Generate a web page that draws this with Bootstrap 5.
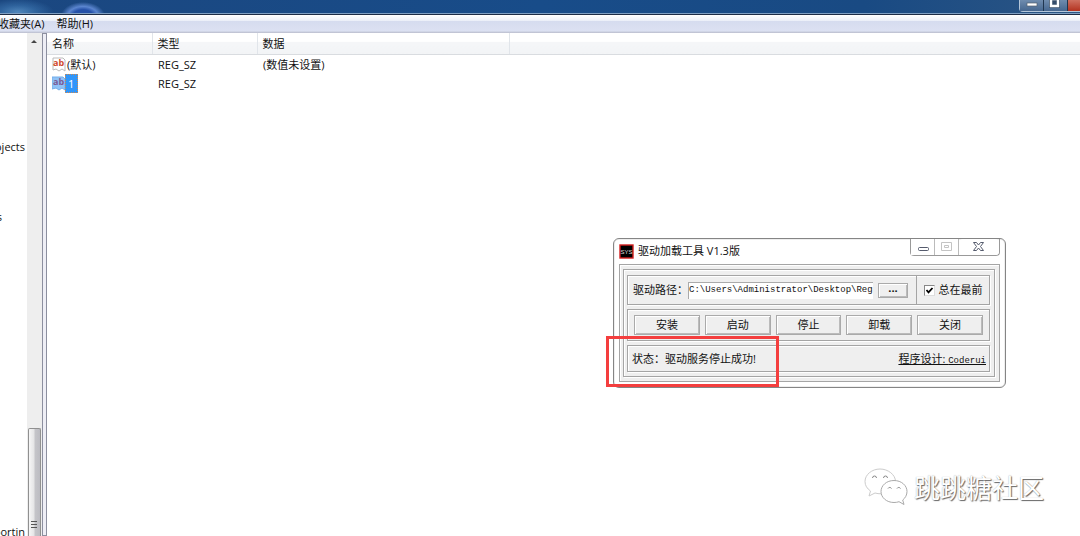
<!DOCTYPE html>
<html lang="zh-CN">
<head>
<meta charset="utf-8">
<meta name="viewport" content="width=device-width, initial-scale=1">
<title>注册表编辑器</title>
<link rel="stylesheet" href="https://cdn.jsdelivr.net/npm/bootstrap@5.3.0/dist/css/bootstrap.min.css">
<style>
body{font:11px/18px "Open Sans","Noto Sans CJK SC",sans-serif;color:#111;background:#fff}
button{padding:0;border:0;font:inherit;color:inherit}
svg{display:block}
/* main window chrome */
.titlebar{height:15px;background:radial-gradient(ellipse 36px 13px at 18px 12px,#6aa5d8aa 0,#3f7ab588 50%,transparent 100%),radial-gradient(ellipse 22px 14px at 83px 16px,#2450a8 0 45%,#6a94e2cc 68%,transparent 100%),linear-gradient(90deg,#1b4780,#184c89 50%,#194a83 80%,#2b5584);border-bottom:1px solid #1d2c46;box-shadow:inset 0 -1px #7f9fc2}
.caption-set{height:12px;border:1px solid #b4c6da;border-width:0 0 1px 1px;border-bottom-left-radius:4px}
.caption-set button{width:24px;background:linear-gradient(#6f8cae,#46678f);border-right:1px solid #20364f}
.caption-set .x-main{width:12px;background:linear-gradient(#cf7060,#b3321f);border:0}
.menubar{height:18px;background:linear-gradient(#fff 0,#eef1f9 30%,#d6dcef 36%,#dce1f2 88%,#b9bccc 100%)}
.menubar a{color:#111;line-height:17px}
.menu-fav{margin-left:-2px}
.tree-pane{width:27px}
.tree-pane li{height:18px;padding-right:2px;white-space:nowrap;display:flex;justify-content:flex-end}
.tree-first{margin-top:105px}
.tree-second{margin-top:52px;margin-right:23px}
.tree-pane .tree-last{height:13px}
.scroll-track{width:15px;background:#eee}
.scroll-thumb{height:21.5%;margin:0 1px;border:1px solid #909090;border-bottom:0;border-radius:2px 2px 0 0;background:linear-gradient(90deg,#f6f6f6,#e5e5e6 45%,#c5c5c9 55%,#bcbcc2)}
.splitter{width:5px;background:#eeeef5;border:1px solid #8c8f9f}
.reg-table{table-layout:fixed}
.reg-table th{height:21px;padding:2px 5px 0;font-weight:400;background:linear-gradient(#fff 40%,#f5f6f8 45%,#f2f4f6);border-right:1px solid #e1e5ea;border-bottom:1px solid #d9dce0}
.reg-table th:last-child{border-right:0}
.reg-table td{height:19px;padding:0 6px;line-height:19px;vertical-align:top}
.reg-table td:first-child{padding-left:5px}
.c-name,.c-type{width:105px}.c-data{width:252px}
.picked{background:#3096fa;color:#fff;padding:0 4px 0 3px;outline:1px dotted #d08b50;outline-offset:-1px}
/* driver tool window */
.tool{left:613px;top:238px;width:393px;background:#fff;border:1px solid #858585;border-radius:6px;padding:0 5px 5px;box-shadow:inset 0 0 0 1px #eee}
.tool-title{height:25px}
.tool-title h1{font-size:11px;line-height:24px}
.tool-caps{height:17px;border:1px solid #999;border-top:0;border-radius:0 0 4px 4px}
.tool-caps button{width:24px;background:#fff;border-right:1px solid #bbb}
.tool-caps button:last-child{width:40px;border:0;border-radius:4px}
.etched{border:1px solid #a5a5a5;box-shadow:inset 1px 1px #fff,1px 1px #fff}
.shell{background:#efefef;padding:4px 4px 4px 3px}
.stack{padding:5px 4px 4px 3px;gap:4px}
.path-row{height:30px}
.path-cell{padding-left:5px;border-right:1px solid #a5a5a5}
.path-box{width:185px;height:17px;border:0;border-top:1px solid #aaa;border-left:1px solid #aaa;border-radius:0;padding:0 0 2px;background:#fff;color:#111;font:9px/14px "Liberation Mono",monospace;outline:0}
.raised{background:#efefef;border:1px solid #fff;border-right-color:#777;border-bottom-color:#777;outline:1px solid #aaa;outline-offset:-1px;box-shadow:inset 1px 1px #fff,inset -1px -1px #bbb}
.browse{width:30px;height:15px;margin:0 8px 0 5px;line-height:9px;font-weight:700}
.top-check input{appearance:none;width:11px;height:11px;margin:0;border:1px solid #888;border-right-color:#ddd;border-bottom-color:#ddd;background:#fff}
.top-check input:checked{background:#fff url("data:image/svg+xml,%3Csvg xmlns='http://www.w3.org/2000/svg' viewBox='0 0 9 9'%3E%3Cpath d='M1.5 4l2 2.3L7.5 2' fill='none' stroke='%23000' stroke-width='1.8'/%3E%3C/svg%3E") center/9px}
.button-row{height:32px;padding:0 6px;gap:5px}
.button-row button{height:20px;line-height:16px}
.status-row{height:27px;padding:0 3px 0 4px}
.credit{color:#111;font-size:11px}
.credit span{font:9px "Liberation Mono",monospace}
.highlight{left:-22px;top:-10px;width:173px;height:51px;border:3px solid #f43e3e;pointer-events:none}
.watermark{right:36px;bottom:29px;gap:6px;color:#fff;font:26px/40px "Noto Sans CJK SC",sans-serif;text-shadow:1px 1px 1px #666,0 0 1px #aaa}
</style>
</head>
<body>
<div class="vh-100 d-flex flex-column overflow-hidden position-relative">
  <header class="titlebar d-flex justify-content-end flex-shrink-0">
    <div class="caption-set d-flex">
      <button aria-label="最小化"><svg width="23" height="11"><rect x="7" y="3" width="10" height="3" fill="#fff" stroke="#53606d" stroke-width=".7"/></svg></button>
      <button aria-label="最大化"><svg width="23" height="11"><path d="M7-1h7v7H7z" fill="none" stroke="#3e536a" stroke-width="4"/><path d="M7-1h7v7H7z" fill="none" stroke="#fff" stroke-width="2.4"/><path d="M9 1h3v3H9z" fill="#354d6a"/></svg></button>
      <button class="x-main" aria-label="关闭"></button>
    </div>
  </header>
  <nav class="menubar d-flex flex-shrink-0">
    <a class="menu-fav text-decoration-none text-nowrap" href="#">收藏夹(A)</a>
    <a class="text-decoration-none text-nowrap ps-2 ms-1" href="#">帮助(H)</a>
  </nav>
  <main class="d-flex flex-grow-1 overflow-hidden">
    <aside class="tree-pane flex-shrink-0 overflow-hidden">
      <ul class="list-unstyled mb-0 h-100 d-flex flex-column">
        <li class="tree-first">ojects</li>
        <li class="tree-second">s</li>
        <li class="tree-last mt-auto flex-shrink-0">portin</li>
      </ul>
    </aside>
    <div class="scroll-track d-flex flex-column flex-shrink-0 justify-content-between">
      <svg width="15" height="17"><path d="M4 10l3-3 3 3z" fill="#444"/></svg>
      <div class="scroll-thumb d-flex align-items-end justify-content-center pb-2"><svg width="7" height="7"><path d="M0 .5h6M0 3.5h6M0 6.5h6" stroke="#555"/></svg></div>
    </div>
    <div class="splitter flex-shrink-0"></div>
    <section class="flex-grow-1">
      <table class="reg-table w-100">
        <colgroup><col class="c-name"><col class="c-type"><col class="c-data"><col></colgroup>
        <thead><tr><th>名称</th><th>类型</th><th>数据</th><th></th></tr></thead>
        <tbody>
          <tr><td><div class="d-flex align-items-center"><svg width="15" height="15" viewBox="0 0 15 15"><path d="M1 1h10l2 2v11l-3-2-3 2-3-2-3 1z" fill="#fff" stroke="#bbb"/><text x="1" y="9" font-size="9" font-weight="700" fill="#d0492c">ab</text></svg>(默认)</div></td><td>REG_SZ</td><td>(数值未设置)</td><td></td></tr>
          <tr><td><div class="d-flex align-items-center"><svg width="13" height="15" viewBox="0 0 13 15"><path d="M0 1h11l2 2v11l-3-2-3 2-3-2-4 1z" fill="#8fc2f7" stroke="#75aeea"/><text x="1" y="9" font-size="9" font-weight="700" fill="#795b96">ab</text></svg><span class="picked">1</span></div></td><td>REG_SZ</td><td></td><td></td></tr>
        </tbody>
      </table>
    </section>
  </main>

  <section class="tool position-absolute">
    <div class="tool-title d-flex align-items-start">
      <svg class="mt-1" width="15" height="16" viewBox="0 0 15 16"><rect x="1" y="2" width="13" height="13" fill="#000" stroke="#d21e1e" stroke-width="1.4"/><text x="1.5" y="11" font-family="Liberation Sans" font-size="6" fill="#ddd">SYS</text></svg>
      <h1 class="mb-0 ms-1 fw-normal">驱动加载工具 V1.3版</h1>
      <div class="tool-caps ms-auto d-flex">
        <button aria-label="最小化"><svg width="23" height="16"><rect x="7.5" y="8.500" width="10" height="3" rx="1" fill="#fff" stroke="#555b6d"/></svg></button>
        <button aria-label="最大化" disabled><svg width="23" height="16"><path d="M6.500 3.500h10v8h-10zM9.500 6.500h4v2h-4z" fill="#fff" stroke="#c4c4c4"/></svg></button>
        <button aria-label="关闭"><svg width="40" height="16"><path d="M14.500 3.500h3l2 2.500 2-2.500h3l-3 4 3 4h-3l-2-2.500-2 2.500h-3l3-4z" fill="#fff" stroke="#555b6d"/></svg></button>
      </div>
    </div>
    <div class="shell etched">
      <div class="stack etched d-flex flex-column">
        <div class="path-row etched d-flex">
          <div class="path-cell d-flex align-items-center">
            <label class="text-nowrap" for="path">驱动路径&#65306;</label>
            <input class="path-box" id="path" value="C:\Users\Administrator\Desktop\Reg">
            <button class="browse raised" aria-label="浏览">···</button>
          </div>
          <div class="top-check d-flex flex-grow-1 align-items-center justify-content-center gap-1">
            <input id="ontop" type="checkbox" checked><label class="text-nowrap" for="ontop">总在最前</label>
          </div>
        </div>
        <div class="button-row etched d-flex align-items-center">
          <button class="raised flex-fill">安装</button><button class="raised flex-fill">启动</button><button class="raised flex-fill">停止</button><button class="raised flex-fill">卸载</button><button class="raised flex-fill">关闭</button>
        </div>
        <div class="status-row etched d-flex align-items-center justify-content-between position-relative">
          <span>状态&#65306;驱动服务停止成功!</span>
          <a class="credit" href="#">程序设计: <span>Coderui</span></a>
          <div class="highlight position-absolute"></div>
        </div>
      </div>
    </div>
  </section>

  <div class="watermark position-absolute d-flex align-items-center">
    <svg width="44" height="38" viewBox="0 0 44 38" fill="#fff" stroke="#aaa" stroke-width="1">
      <path stroke="#ccc" d="M16 1C8 1 1 6.500 1 13.500c0 4 2 7 5.500 9.500L5 28l6-3c2 .6 4 .8 6 .8 8 0 14.500-5.500 14.500-12.300S24 1 16 1z"/>
      <path d="M30 12.500c-7.500 0-13 5-13 11s5.500 11 13 11c2 0 3.500-.3 5-.8l5 2.800-1.300-4.500c2.600-2 4.300-5 4.300-8.500 0-6-5.500-11-13-11z"/>
      <path d="M8.500 10a2 2 0 0 1 4 0M19.500 10a2 2 0 0 1 4 0M24 20.500a2 2 0 0 1 3.500 0M33 20.500a2 2 0 0 1 3.500 0" fill="none" stroke="#888"/>
    </svg>
    <span>跳跳糖社区</span>
  </div>
</div>
<script src="https://cdn.jsdelivr.net/npm/bootstrap@5.3.0/dist/js/bootstrap.bundle.min.js"></script>
</body>
</html>
